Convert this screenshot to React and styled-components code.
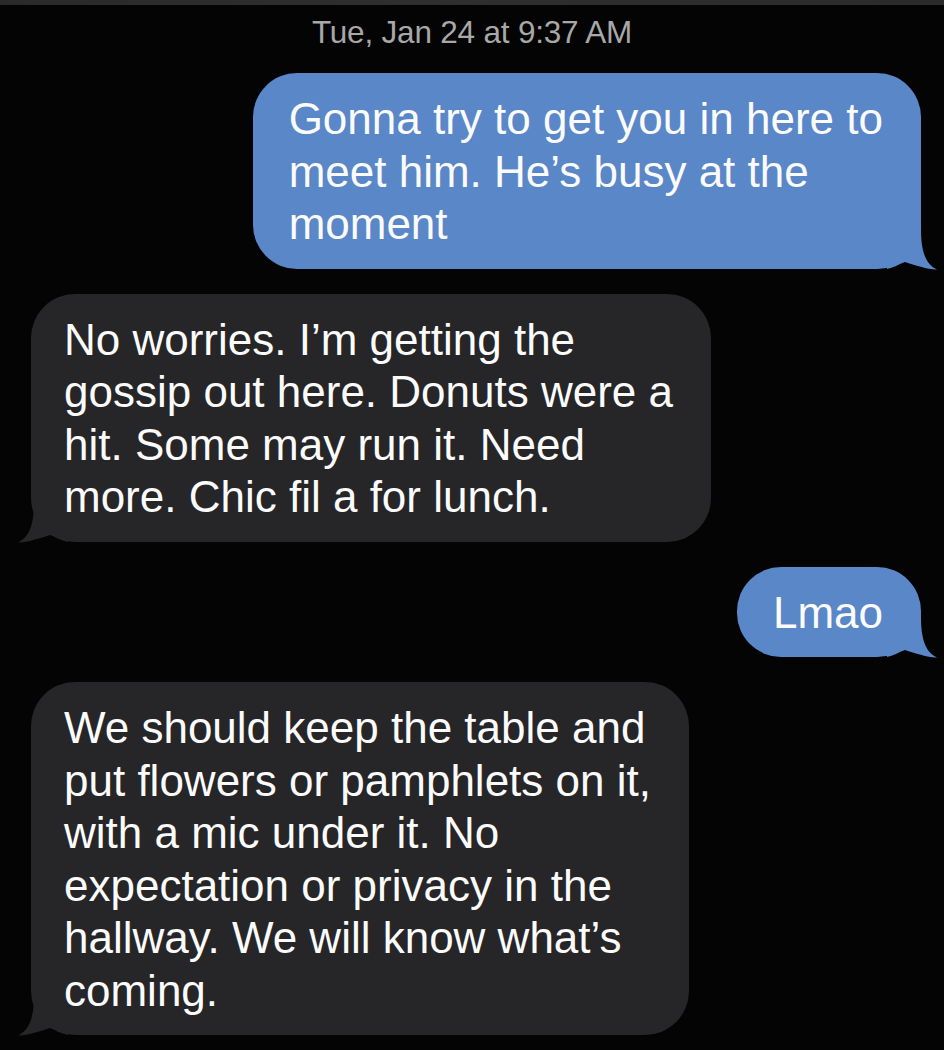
import React from "react";
import styled, { createGlobalStyle } from "styled-components";

const GlobalStyle = createGlobalStyle`
  html, body {
    margin: 0;
    padding: 0;
    background: #040404;
  }
  body {
    font-family: "Liberation Sans", Arial, sans-serif;
    -webkit-font-smoothing: antialiased;
  }
`;

const Screen = styled.div`
  width: 944px;
  min-height: 1050px;
  background: #040404;
  display: flex;
  flex-direction: column;
  overflow: hidden;
`;

const TopStrip = styled.div`
  height: 5px;
  background: linear-gradient(90deg, #2a2a2a 0%, #2f2f2f 45%, #2b2b2b 100%);
`;

const Stamp = styled.div`
  margin-top: 9px;
  height: 36px;
  line-height: 36px;
  text-align: center;
  font-size: 31.5px;
  color: #a8a8a8;
  letter-spacing: -0.2px;
`;

const Thread = styled.div`
  display: flex;
  flex-direction: column;
  gap: 25px;
  margin-top: 23px;
`;

const Row = styled.div`
  display: flex;
  justify-content: ${(p) => (p.$from === "me" ? "flex-end" : "flex-start")};
  padding: ${(p) => (p.$from === "me" ? "0 23px 0 0" : "0 0 0 31px")};
`;

const Bubble = styled.div`
  position: relative;
  background: ${(p) => (p.$from === "me" ? "#5a87c8" : "#262628")};
  color: #fbfbfb;
  border-radius: 44px;
  padding: ${(p) => (p.$from === "me" ? "20px 38px 18px 36px" : "20px 38px 18px 33px")};
  font-size: 44px;
  line-height: 52.5px;
  white-space: pre;
`;

const Text = styled.span`
  position: relative;
  z-index: 1;
`;

const TailSvg = styled.svg`
  position: absolute;
  z-index: 0;
  bottom: -1px;
  width: 50px;
  height: 46px;
  ${(p) =>
    p.$from === "me"
      ? "right: -16px;"
      : "left: -13px; transform: scaleX(-1);"}
`;

function Tail({ from, color }) {
  return (
    <TailSvg $from={from} viewBox="0 0 50 46" aria-hidden="true">
      <path
        d="M0,0 L34,0 L34,5 C34,26 38,40 50,45.5 C42,46 28,41 18,38 C12,40 6,44 0,45 Z"
        fill={color}
      />
    </TailSvg>
  );
}

const messages = [
  {
    from: "me",
    text: "Gonna try to get you in here to\nmeet him. He\u2019s busy at the\nmoment",
  },
  {
    from: "them",
    text: "No worries. I\u2019m getting the\ngossip out here. Donuts were a\nhit. Some may run it. Need\nmore. Chic fil a for lunch.",
  },
  { from: "me", text: "Lmao" },
  {
    from: "them",
    text: "We should keep the table and\nput flowers or pamphlets on it,\nwith a mic under it. No\nexpectation or privacy in the\nhallway. We will know what\u2019s\ncoming.",
  },
];

export default function App() {
  return (
    <>
      <GlobalStyle />
      <Screen>
        <TopStrip />
        <Stamp>Tue, Jan 24 at 9:37 AM</Stamp>
        <Thread>
          {messages.map((m, i) => (
            <Row key={i} $from={m.from}>
              <Bubble $from={m.from}>
                <Tail from={m.from} color={m.from === "me" ? "#5a87c8" : "#262628"} />
                <Text>{m.text}</Text>
              </Bubble>
            </Row>
          ))}
        </Thread>
      </Screen>
    </>
  );
}
